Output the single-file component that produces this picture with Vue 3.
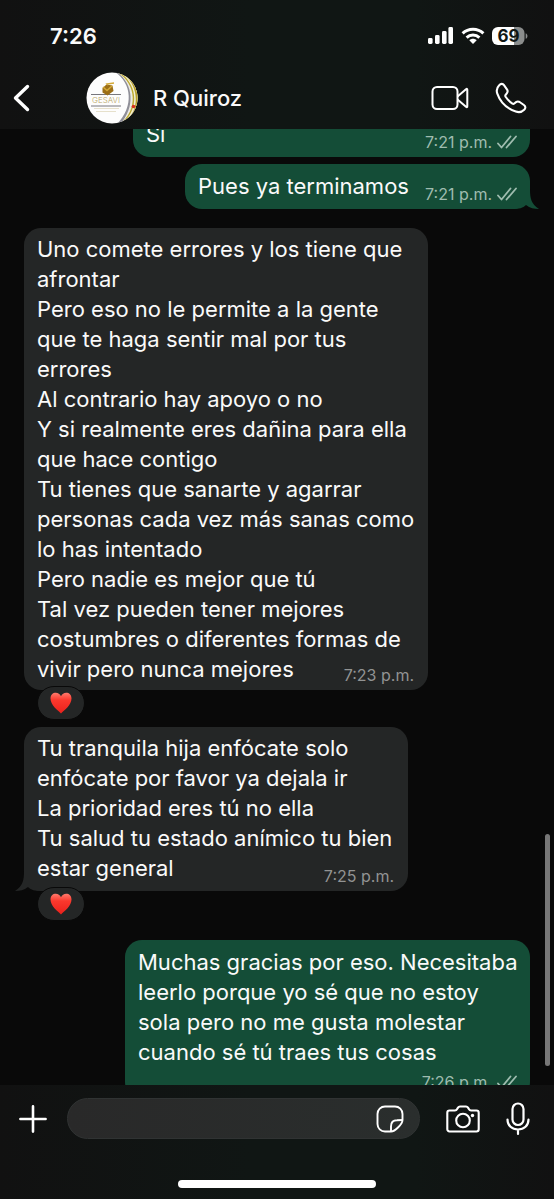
<script setup>
import { ref } from 'vue'

const draft = ref('')

const messages = [
  { id: 1, side: 'out', shape: 'clipped', lines: ['Sí'], time: '7:21 p.m.' },
  { id: 2, side: 'out', shape: 'short', lines: ['Pues ya terminamos'], time: '7:21 p.m.', tail: true },
  {
    id: 3,
    side: 'in',
    shape: 'wide',
    lines: [
      'Uno comete errores y los tiene que',
      'afrontar',
      'Pero eso no le permite a la gente',
      'que te haga sentir mal por tus',
      'errores',
      'Al contrario hay apoyo o no',
      'Y si realmente eres dañina para ella',
      'que hace contigo',
      'Tu tienes que sanarte y agarrar',
      'personas cada vez más sanas como',
      'lo has intentado',
      'Pero nadie es mejor que tú',
      'Tal vez pueden tener mejores',
      'costumbres o diferentes formas de',
      'vivir pero nunca mejores',
    ],
    time: '7:23 p.m.',
    reaction: true,
  },
  {
    id: 4,
    side: 'in',
    shape: 'medium',
    lines: [
      'Tu tranquila hija enfócate solo',
      'enfócate por favor ya dejala ir',
      'La prioridad eres tú no ella',
      'Tu salud tu estado anímico tu bien',
      'estar general',
    ],
    time: '7:25 p.m.',
    reaction: true,
    tail: true,
  },
  {
    id: 5,
    side: 'out',
    shape: 'tall',
    lines: [
      'Muchas gracias por eso. Necesitaba',
      'leerlo porque yo sé que no estoy',
      'sola pero no me gusta molestar',
      'cuando sé tú traes tus cosas',
    ],
    time: '7:26 p.m.',
  },
]
</script>

<template>
  <div class="phone">
    <header class="top">
      <div class="status">
        <span class="clock">7:26</span>
        <div class="indicators">
          <svg width="26" height="18" viewBox="0 0 26 18" fill="#fff" aria-hidden="true">
            <rect x="0" y="11" width="4.600" height="6" rx="1.400" />
            <rect x="7" y="8" width="4.600" height="9" rx="1.400" />
            <rect x="14" y="4" width="4.600" height="13" rx="1.400" />
            <rect x="20.400" y="0" width="4.600" height="17" rx="1.400" />
          </svg>
          <svg width="24" height="18" viewBox="0 0 24 18" fill="none" stroke="#fff" stroke-width="3" aria-hidden="true">
            <path d="M1.600 6.400C7.400.8 16.600.8 22.400 6.400" />
            <path d="M5.600 10.600c3.600-3.400 9.200-3.400 12.800 0" />
            <path d="M8.300 13.200c2.100-2 5.300-2 7.400 0L12 17z" fill="#fff" stroke="none" />
          </svg>
          <div class="battery">
            <svg width="37" height="18" viewBox="0 0 37 18" aria-hidden="true">
              <path d="M6 0H22V18H6a6 6 0 0 1-6-6V6a6 6 0 0 1 6-6z" fill="#fff" />
              <path d="M22 0h4.500a6 6 0 0 1 6 6v6a6 6 0 0 1-6 6H22z" fill="#8b8d8c" />
              <path d="M33.700 6.200c2.300.9 2.300 4.700 0 5.600z" fill="#8b8d8c" />
            </svg>
            <span class="level">69</span>
          </div>
        </div>
      </div>
      <div class="contact">
        <button class="icon back" aria-label="Atrás">
          <svg width="18" height="28" viewBox="0 0 18 28" fill="none" stroke="#fff" stroke-width="3.400" stroke-linecap="round" stroke-linejoin="round">
            <path d="M15.500 2.500 3.500 14l12 11.500" />
          </svg>
        </button>
        <svg class="avatar" width="52" height="52" viewBox="0 0 52 52" aria-hidden="true">
          <defs>
            <clipPath id="face"><circle cx="26" cy="26" r="25.500" /></clipPath>
          </defs>
          <g clip-path="url(#face)">
            <rect width="52" height="52" fill="#fdfdfd" />
            <path d="M29 0c17 11 19 35 2 52h21V0z" fill="#8f8f98" />
            <path d="M31 0c17 12 18 36 3 52h18V0z" fill="#eceae4" />
            <path d="M31 0c20 12 21 38 3 52h18V0z" fill="#bda92e" />
            <path d="M36 2c16 13 16 35 2 48h14V2z" fill="#f2eed0" />
            <path d="M39 3c14 13 14 33 2 46h11V3z" fill="#b59d2b" />
            <path d="M5 22.500h30M5 34h30" stroke="#77777c" />
            <path d="M8 36.500h25M10 39.500h20" stroke="#e6e0cb" />
            <path d="m16.500 16 4-3.500 6 1 1 5.500-6 4.500-5-3z" fill="#9c6f18" />
            <path d="m17 15 4 3.500 5-4.500M22 13l-1-1 7-1" fill="none" stroke="#d4a937" stroke-width="1.500" />
            <circle cx="47.500" cy="34.500" r="1.800" fill="#d8321f" />
          </g>
          <text x="20" y="31" text-anchor="middle" class="brand">GESAVI</text>
        </svg>
        <h1 class="name">R Quiroz</h1>
        <div class="calls">
          <button class="icon" aria-label="Videollamada">
            <svg width="38" height="26" viewBox="0 0 38 26" fill="none" stroke="#fff" stroke-width="2" stroke-linejoin="round">
              <rect x="1.500" y="2" width="25" height="22" rx="4.500" />
              <path d="M26.500 11.500 35 4.200q1.300-1 1.300.6v16.400q0 1.600-1.300.6l-8.500-7.300" />
            </svg>
          </button>
          <button class="icon" aria-label="Llamar">
            <svg width="32" height="32" viewBox="0 0 32 32" fill="none" stroke="#fff" stroke-width="2.100" stroke-linejoin="round">
              <path d="M4.200 3.200C5.900 1.300 7.900 1.600 9 3.200l3.100 4.400c.9 1.400.7 2.400-.3 3.700l-1.200 1.500c-.5.7-.4 1.300 0 2 1.800 2.800 4 5 6.800 6.800.7.400 1.300.4 1.900-.1l1.700-1.300c1.200-.9 2.300-1 3.600-.2l4.300 3c1.700 1.200 2 3.100.3 4.800-2.200 2.200-5 3-8.400 1.800C11.900 26.500 5.100 19.600 2.300 11.600 1.100 8.200 2 5.400 4.200 3.200z" />
            </svg>
          </button>
        </div>
      </div>
    </header>

    <main class="chat">
      <article v-for="m in messages" :key="m.id" class="bubble" :class="[m.side, m.shape]">
        <svg v-if="m.tail" class="tail" width="26" height="20" viewBox="0 0 26 20" fill="currentColor" aria-hidden="true">
          <path d="M0 20V0h17c0 9 1 15 9 20-5 0-9-1-13-4-3 3-7 4-13 4z" />
        </svg>
        <p class="text">
          <span v-for="line in m.lines" :key="line" class="line">{{ line }}</span>
        </p>
        <div class="meta">
          <time>{{ m.time }}</time>
          <svg v-if="m.side === 'out'" width="20" height="14" viewBox="0 0 20 14" fill="none" stroke="#9fbcaf" stroke-width="1.800" stroke-linecap="round" stroke-linejoin="round" aria-hidden="true">
            <path d="m1 8.500 3.500 4L13.500 1.500M9.500 12.500l9.500-11" />
          </svg>
        </div>
        <span v-if="m.reaction" class="reaction" role="img" aria-label="Corazón">
          <svg width="22" height="22" viewBox="0 0 22 22">
            <defs>
              <linearGradient :id="'heart' + m.id" x1="0" y1="0" x2="0" y2="1">
                <stop offset="0" stop-color="#ff7a6c" />
                <stop offset="0.350" stop-color="#fa382d" />
                <stop offset="1" stop-color="#ea211c" />
              </linearGradient>
            </defs>
            <path d="M11 21.500C7.500 18 .5 13 .5 6.500.5 2.800 2.900.8 5.800.8c2.300 0 4.200 1.400 5.200 3.500C12 2.200 13.900.8 16.200.8c2.900 0 5.300 2 5.300 5.700 0 6.500-7 11.500-10.500 15z" :fill="'url(#heart' + m.id + ')'" />
          </svg>
        </span>
      </article>
      <div class="scrollbar"></div>
    </main>

    <footer class="bottom">
      <div class="composer">
        <button class="icon" aria-label="Adjuntar">
          <svg width="28" height="28" viewBox="0 0 28 28" stroke="#fff" stroke-width="2.600" stroke-linecap="round">
            <path d="M14 1.400v25.200M1.400 14h25.200" />
          </svg>
        </button>
        <div class="field">
          <input v-model="draft" type="text" aria-label="Mensaje" />
          <button class="icon" aria-label="Stickers">
            <svg width="28" height="28" viewBox="0 0 28 28" fill="none" stroke="#fff" stroke-width="1.900" stroke-linejoin="round">
              <path d="M9 1.500h10a7.500 7.500 0 0 1 7.500 7.500v6c0 4-7.500 11.500-11.500 11.500H9A7.500 7.500 0 0 1 1.500 19V9A7.500 7.500 0 0 1 9 1.500z" />
              <path d="M15 26.500V21.500c0-4.500 2-6.200 6-6.200l5.500-.3" />
            </svg>
          </button>
        </div>
        <button class="icon camera" aria-label="Cámara">
          <svg width="34" height="28" viewBox="0 0 34 28" fill="none" stroke="#fff" stroke-width="2.100" stroke-linejoin="round">
            <path d="M3.500 5.500H9c1 0 1.500-.3 2-1.200l1-1.700c.5-.8 1-1.100 2-1.100h6c1 0 1.500.3 2 1.100l1 1.700c.5.900 1 1.200 2 1.200h5.500a2.200 2.200 0 0 1 2.200 2.200v16.600a2.200 2.200 0 0 1-2.200 2.200h-27a2.200 2.200 0 0 1-2.200-2.200V7.700a2.200 2.200 0 0 1 2.200-2.200z" />
            <circle cx="17" cy="15.500" r="6.800" />
            <circle cx="26.500" cy="10.500" r="1.700" fill="#fff" stroke="none" />
          </svg>
        </button>
        <button class="icon" aria-label="Mensaje de voz">
          <svg width="24" height="34" viewBox="0 0 24 34" fill="none" stroke="#fff" stroke-width="2.200" stroke-linecap="round">
            <rect x="6.500" y="1.500" width="11" height="21.500" rx="5.500" />
            <path d="M1.500 17.500c0 6 4.500 10 10.500 10s10.500-4 10.500-10M12 27.500v4.500" />
          </svg>
        </button>
      </div>
      <div class="home"></div>
    </footer>
  </div>
</template>

<style>
body {
  margin: 0;
  background: #090909;
}
</style>

<style scoped>
.phone {
  display: flex;
  flex-direction: column;
  height: 100vh;
  overflow: hidden;
  background: #090909;
  color: #fafafa;
  font-family: Inter, "Noto Sans", sans-serif;
}

.top,
.bottom {
  flex: none;
  background: linear-gradient(90deg, #111111 0%, #101614 45%, #101614 75%, #111111 100%);
}

.top {
  padding: 20px 27px 5px 10px;
}

.status {
  display: flex;
  align-items: center;
  justify-content: space-between;
  height: 32px;
  padding-left: 40px;
}

.clock {
  font-size: 22px;
  font-weight: 600;
}

.indicators {
  display: flex;
  align-items: center;
  gap: 7px;
  margin-right: -2px;
}

.battery {
  display: grid;
}

.battery > * {
  grid-area: 1 / 1;
}

.level {
  width: 33px;
  color: #101614;
  font-size: 17px;
  font-weight: 700;
  line-height: 18px;
  text-align: center;
}

.contact {
  display: flex;
  align-items: center;
  height: 52px;
  margin-top: 20px;
}

.icon {
  display: flex;
  flex: none;
  padding: 0;
  border: 0;
  background: none;
}

.back {
  padding-left: 2px;
}

.avatar {
  margin-left: 56px;
}

.brand {
  fill: #b9a565;
  font-size: 8px;
  font-weight: 300;
}

.name {
  margin: 0 auto 0 15px;
  font-size: 22px;
  font-weight: 500;
}

.calls {
  display: flex;
  align-items: center;
  gap: 26px;
}

.chat {
  position: relative;
  display: flex;
  flex: 1;
  flex-direction: column;
  min-height: 0;
  padding: 0 24px;
  overflow: hidden;
}

.bubble {
  position: relative;
  display: flex;
  flex: none;
  justify-content: space-between;
  box-sizing: border-box;
  max-width: 100%;
  padding: 7px 13px 8px;
  border-radius: 17px;
}

.in {
  align-self: flex-start;
  color: #242626;
  background: #242626;
}

.out {
  align-self: flex-end;
  color: #144d37;
  background: #144d37;
}

.clipped {
  width: 397px;
  margin-top: -17px;
}

.short {
  width: 345px;
  margin-top: 7px;
}

.wide {
  width: 404px;
  margin-top: 19px;
  padding: 6px 13px;
}

.medium {
  width: 384px;
  margin-top: 37px;
  padding: 6px 13px 8px;
}

.tall {
  flex-direction: column;
  gap: 6px;
  width: 405px;
  margin-top: 49px;
}

.text {
  position: relative;
  margin: 0;
  color: #fafafa;
  font-size: 22px;
  line-height: 30px;
}

.line {
  display: block;
  white-space: nowrap;
}

.meta {
  position: relative;
  display: flex;
  align-items: center;
  align-self: flex-end;
  gap: 5px;
  height: 18px;
  font-size: 16px;
  line-height: 18px;
  white-space: nowrap;
}

.out .meta {
  color: #9fbcaf;
}

.in .meta {
  position: absolute;
  right: 14px;
  bottom: 6px;
  color: #929393;
}

.short .meta,
.clipped .meta {
  margin-bottom: -2px;
}

.tail {
  position: absolute;
  right: -9px;
  bottom: 0;
}

.in .tail {
  right: auto;
  left: -9px;
  transform: scaleX(-1);
}

.reaction {
  position: absolute;
  top: calc(100% - 4px);
  left: 13px;
  display: flex;
  align-items: center;
  justify-content: center;
  width: 46px;
  height: 32px;
  border: 1px solid #090909;
  border-radius: 17px;
  background: #242626;
}

.scrollbar {
  position: absolute;
  right: 4px;
  bottom: 19px;
  width: 5px;
  height: 232px;
  border-radius: 3px;
  background: #777777;
}

.bottom {
  padding: 13px 0 11px;
}

.composer {
  display: flex;
  align-items: center;
  padding: 0 24px 0 19px;
}

.field {
  display: flex;
  flex: 1;
  align-items: center;
  box-sizing: border-box;
  height: 41px;
  min-width: 0;
  margin: 0 26px 0 20px;
  padding: 0 15px 0 20px;
  border: 1px solid #303333;
  border-radius: 21px;
  background: linear-gradient(90deg, #292929, #2a2e2d);
}

.field input {
  flex: 1;
  min-width: 0;
  padding: 0;
  border: 0;
  outline: 0;
  background: none;
  color: #fafafa;
  font: inherit;
  font-size: 22px;
}

.camera {
  margin-right: 26px;
}

.home {
  width: 198px;
  height: 8px;
  margin: 41px auto 0;
  border-radius: 4px;
  background: #ffffff;
}
</style>
